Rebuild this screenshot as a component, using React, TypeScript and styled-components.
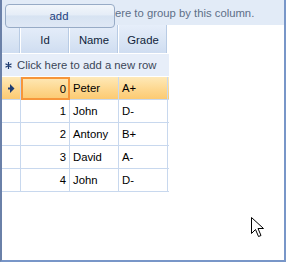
import React from 'react';
import styled, { createGlobalStyle } from 'styled-components';

const GlobalStyle = createGlobalStyle`
  body {
    margin: 0;
    background: #ffffff;
  }
`;

type Row = { id: number; name: string; grade: string };

const rows: Row[] = [
  { id: 0, name: 'Peter', grade: 'A+' },
  { id: 1, name: 'John', grade: 'D-' },
  { id: 2, name: 'Antony', grade: 'B+' },
  { id: 3, name: 'David', grade: 'A-' },
  { id: 4, name: 'John', grade: 'D-' },
];

const columns = '19px 49px 49px 49px';

function App() {
  return (
    <>
      <GlobalStyle />
      <Frame>
        <GroupPanel>
          <GroupText>Drag a column here to group by this column.</GroupText>
        </GroupPanel>
        <AddButton>add</AddButton>
        <Grid>
          <HeaderRow>
            <HeaderCell />
            <HeaderCell>Id</HeaderCell>
            <HeaderCell>Name</HeaderCell>
            <HeaderCell>Grade</HeaderCell>
          </HeaderRow>
          <NewRow>
            <Star>
              <svg width="7" height="7" viewBox="0 0 7 7">
                <path
                  d="M3.5 0 V7 M0.5 1.75 L6.5 5.25 M0.5 5.25 L6.5 1.75"
                  stroke="#1f3c72"
                  strokeWidth="1.2"
                />
              </svg>
            </Star>
            Click here to add a new row
          </NewRow>
          {rows.map((r, i) => (
            <DataRow key={i} selected={i === 0}>
              <Indicator>
                {i === 0 && (
                  <svg width="7" height="9" viewBox="0 0 7 9">
                    <path d="M2 0 L6.5 4.5 L2 9 Z M0 3.5 H3 V5.5 H0 Z" fill="#1f3c72" />
                  </svg>
                )}
              </Indicator>
              <Cell align="right" current={i === 0}>{r.id}</Cell>
              <Cell>{r.name}</Cell>
              <Cell>{r.grade}</Cell>
            </DataRow>
          ))}
        </Grid>
        <Pointer>
          <svg width="14" height="21" viewBox="0 0 14 21">
            <path
              d="M0.5 0.5 L0.5 16.5 L4.5 12.5 L7.5 19.5 L10 18.5 L7 11.5 L12.5 11.5 Z"
              fill="#ffffff"
              stroke="#000000"
              strokeWidth="1"
            />
          </svg>
        </Pointer>
      </Frame>
    </>
  );
}

export default App;

const Frame = styled.div`
  position: relative;
  box-sizing: border-box;
  width: 286px;
  height: 262px;
  border: 2px solid #7896c8;
  border-top: none;
  border-left-color: #6a80a8;
  background: #ffffff;
  font-family: 'Liberation Sans', Arial, sans-serif;
  font-size: 11.3px;
  color: #000;
  overflow: hidden;
`;

const GroupPanel = styled.div`
  height: 25px;
  background: #e2ebf7;
  display: flex;
  align-items: center;
  padding-left: 30px;
`;

const GroupText = styled.span`
  color: #5e6f88;
  white-space: nowrap;
`;

const AddButton = styled.button`
  position: absolute;
  left: 3px;
  top: 4px;
  width: 110px;
  height: 24px;
  box-sizing: border-box;
  border: 1px solid #97abc6;
  border-radius: 4px;
  background: linear-gradient(to bottom, #f2f6fb 0%, #e5edf7 45%, #d7e3f2 50%, #dfe8f5 100%);
  color: #1e3f7e;
  font-family: 'Liberation Sans', Arial, sans-serif;
  font-size: 11.3px;
  padding: 0 2px 0 0;
`;

const Grid = styled.div`
  width: 167px;
  display: flex;
  flex-direction: column;
`;

const HeaderRow = styled.div`
  display: grid;
  grid-template-columns: ${columns};
  height: 29px;
`;

const HeaderCell = styled.div`
  box-sizing: border-box;
  display: flex;
  align-items: center;
  justify-content: center;
  padding-top: 2px;
  background: linear-gradient(to bottom, #e6eefa 0%, #dbe6f5 50%, #cfddf1 100%);
  border-right: 1px solid #ffffff;
  border-bottom: 1px solid #ffffff;
  box-shadow: inset -1px 0 0 #b8cbe4;
  color: #0f1e3a;
`;

const NewRow = styled.div`
  height: 23px;
  box-sizing: border-box;
  display: flex;
  align-items: center;
  padding-left: 2px;
  background: #e7eef9;
  border-bottom: 1px solid #ffffff;
  color: #3b4658;
  white-space: nowrap;
`;

const Star = styled.span`
  width: 12px;
  display: flex;
  align-items: center;
  padding-left: 1px;
`;

const DataRow = styled.div<{ selected?: boolean }>`
  display: grid;
  grid-template-columns: ${columns};
  height: 23px;
  box-sizing: border-box;
  border-bottom: 1px solid #c8d8ee;
  background: ${({ selected }) =>
    selected ? 'linear-gradient(to bottom, #fee9b8 0%, #fdd68c 60%, #fcca72 100%)' : '#ffffff'};
`;

const Indicator = styled.div`
  display: flex;
  align-items: center;
  justify-content: center;
  border-right: 1px solid #c8d8ee;
`;

const Cell = styled.div<{ align?: 'left' | 'right'; current?: boolean }>`
  box-sizing: border-box;
  display: flex;
  align-items: center;
  justify-content: ${({ align }) => (align === 'right' ? 'flex-end' : 'flex-start')};
  padding: 0 3px;
  border-right: 1px solid #c8d8ee;
  ${({ current }) => current && 'border: 2px solid #f7963a; margin-bottom: -1px; padding-right: 2px;'}
`;

const Pointer = styled.div`
  position: absolute;
  left: 249px;
  top: 217px;
  line-height: 0;
`;
